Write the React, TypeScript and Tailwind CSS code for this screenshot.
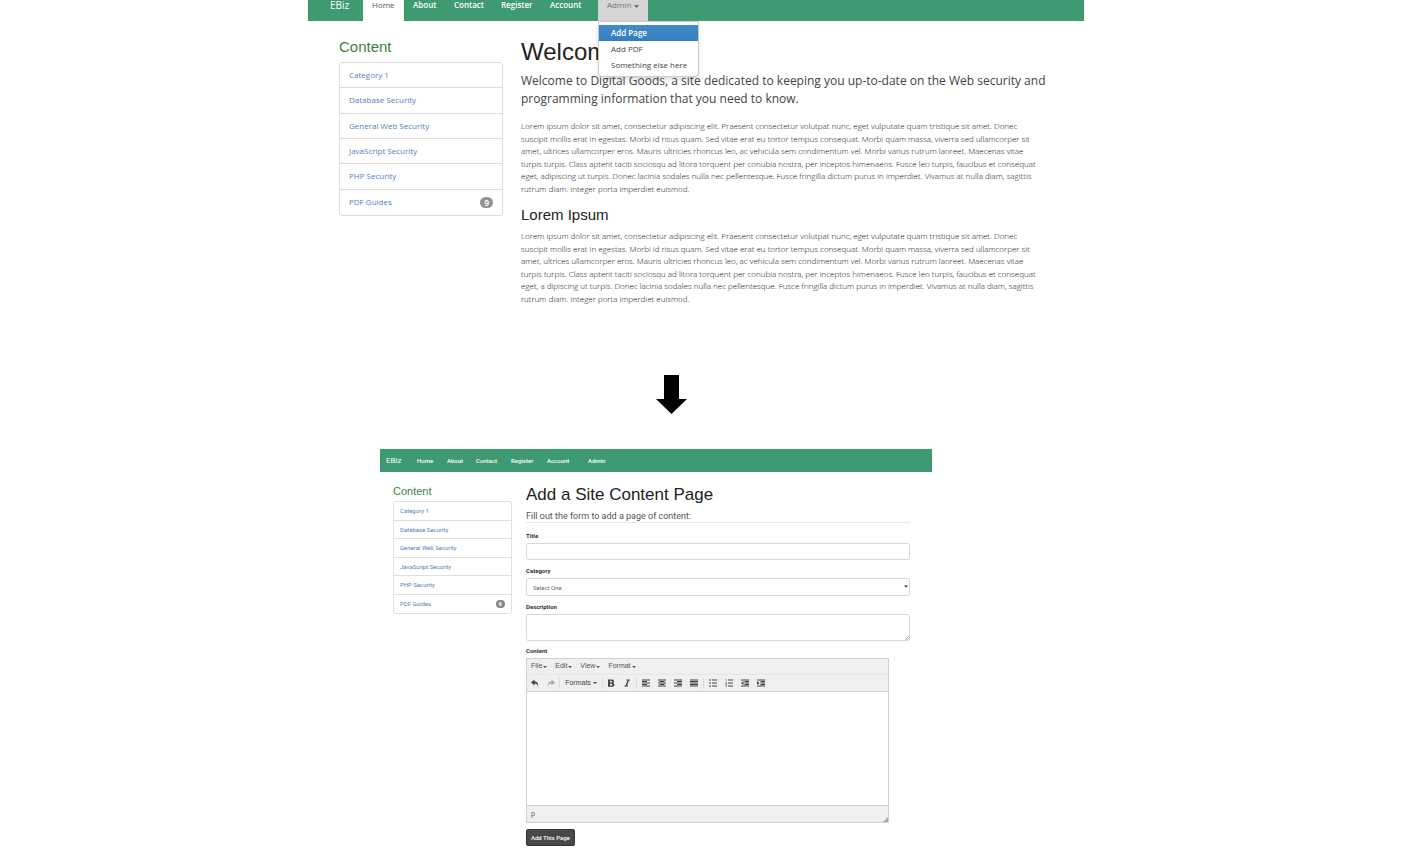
import React from "react";

const categories = [
  "Category 1",
  "Database Security",
  "General Web Security",
  "JavaScript Security",
  "PHP Security",
  "PDF Guides",
];

const introLines = [
  "Lorem ipsum dolor sit amet, consectetur adipiscing elit. Praesent consectetur volutpat nunc, eget vulputate quam tristique sit amet. Donec",
  "suscipit mollis erat in egestas. Morbi id risus quam. Sed vitae erat eu tortor tempus consequat. Morbi quam massa, viverra sed ullamcorper sit",
  "amet, ultrices ullamcorper eros. Mauris ultricies rhoncus leo, ac vehicula sem condimentum vel. Morbi varius rutrum laoreet. Maecenas vitae",
  "turpis turpis. Class aptent taciti sociosqu ad litora torquent per conubia nostra, per inceptos himenaeos. Fusce leo turpis, faucibus et consequat",
  "eget, adipiscing ut turpis. Donec lacinia sodales nulla nec pellentesque. Fusce fringilla dictum purus in imperdiet. Vivamus at nulla diam, sagittis",
  "rutrum diam. Integer porta imperdiet euismod.",
];

const secondLines = introLines.map((line) =>
  line.replace("eget, adipiscing ut", "eget, a dipiscing ut")
);

function Caret({ className }: { className: string }) {
  return (
    <svg viewBox="0 0 6 3" className={className} fill="currentColor" aria-hidden="true">
      <path d="M0 0h6L3 3z" />
    </svg>
  );
}

function Paragraph({ lines }: { lines: string[] }) {
  return (
    <p className="grid min-h-[75px] auto-rows-fr items-center whitespace-nowrap text-[8px] font-light leading-[12px] text-[#111]">
      {lines.map((line) => (
        <span key={line} className="block">
          {line}{" "}
        </span>
      ))}
    </p>
  );
}

function TopNav() {
  return (
    <nav className="flex h-[21px] items-stretch bg-[#3e9a71] text-[8px] font-semibold leading-[10px] text-white">
      <a href="#ebiz" className="w-[55px] pl-[22px] text-[10px] font-medium">
        EBiz
      </a>
      <a href="#home" className="w-[41px] bg-white pl-[9px] font-normal text-[#555]">
        Home
      </a>
      <a href="#about" className="w-[41px] pl-[9px]">
        About
      </a>
      <a href="#contact" className="w-[47px] pl-[9px]">
        Contact
      </a>
      <a href="#register" className="w-[49px] pl-[9px]">
        Register
      </a>
      <a href="#account" className="flex w-[57px] gap-[3px] pl-[9px]">
        Account
        <Caret className="mt-[5px] h-[3px] w-[5px] text-[#4f8a67]" />
      </a>
      <div className="relative w-[50px] bg-[#d5d5d5] font-normal">
        <button type="button" className="flex h-full gap-[3px] pl-[9px] text-[#777]">
          Admin
          <Caret className="mt-[5px] h-[3px] w-[5px] text-[#555]" />
        </button>
        <ul className="absolute left-0 top-full z-10 w-[101px] rounded-b-sm border border-[#ccc] bg-white py-[3px] leading-[16px] text-[#444] shadow-md">
          <li>
            <a
              href="#add-page"
              className="block bg-linear-to-b from-[#428bca] to-[#357ebd] pl-[12px] font-semibold text-white"
            >
              Add Page
            </a>
          </li>
          <li>
            <a href="#add-pdf" className="block pl-[12px]">
              Add PDF
            </a>
          </li>
          <li>
            <a href="#something" className="block whitespace-nowrap pl-[12px]">
              Something else here
            </a>
          </li>
        </ul>
      </div>
    </nav>
  );
}

function HomePage() {
  return (
    <section className="font-['Open_Sans',sans-serif]">
      <TopNav />
      <div className="flex gap-[18px] pl-[31px]">
        <aside className="w-[164px] shrink-0 pt-[17px]">
          <h3 className="font-['Liberation_Sans',sans-serif] text-[15px] leading-[18px] text-[#3f8144]">
            Content
          </h3>
          <ul className="mt-[6px] grid min-h-[154px] auto-rows-fr divide-y divide-[#ddd] rounded-[3px] border border-[#ddd] text-[8px] text-[#4f83c0]">
            {categories.map((name) => (
              <li key={name} className="flex items-center justify-between px-[9px]">
                <a href="#category">{name}</a>
                {name === "PDF Guides" && (
                  <span className="rounded-full bg-[#939393] px-[4px] text-[8px] font-bold leading-[11px] text-white">
                    9
                  </span>
                )}
              </li>
            ))}
          </ul>
        </aside>
        <main className="min-w-0 flex-1 pt-[17px]">
          <h1 className="font-['Liberation_Sans',sans-serif] text-[24px] leading-[28px] text-[#222]">
            Welcome
          </h1>
          <p className="mt-[6px] whitespace-nowrap text-[12px] leading-[18px] text-[#444]">
            Welcome to Digital Goods, a site dedicated to keeping you up-to-date on the Web security and
            <br />
            programming information that you need to know.
          </p>
          <div className="mt-[12px]">
            <Paragraph lines={introLines} />
          </div>
          <h3 className="mb-[6px] mt-[11px] font-['Liberation_Sans',sans-serif] text-[15px] leading-[18px] text-[#222]">
            Lorem Ipsum
          </h3>
          <Paragraph lines={secondLines} />
        </main>
      </div>
    </section>
  );
}

function ToolIcon({ label, children }: { label: string; children: React.ReactNode }) {
  return (
    <button type="button" aria-label={label} className="flex w-[16px] items-center justify-center">
      <svg viewBox="0 0 16 16" className="h-[8px] w-[8px]" fill="currentColor" aria-hidden="true">
        {children}
      </svg>
    </button>
  );
}

function Lines({ d }: { d: string }) {
  return <path d={d} stroke="currentColor" strokeWidth="2.4" fill="none" />;
}

function Separator({ wide = false }: { wide?: boolean }) {
  return <span className={wide ? "mx-px my-[2px] w-px bg-[#dedede]" : "my-[2px] w-px bg-[#dedede]"} />;
}

function Editor() {
  return (
    <div className="mr-[21px] border border-[#d0d0d0] bg-[#efefef] font-['Liberation_Sans',sans-serif] text-[7px] text-[#555]">
      <div className="flex h-[16px] items-center gap-[8px] border-b border-[#e6e6e6] pl-[4px]">
        {["File", "Edit", "View", "Format"].map((name) => (
          <button key={name} type="button" className="flex items-center gap-px">
            {name}
            <Caret className="h-[2px] w-[4px]" />
          </button>
        ))}
      </div>
      <div className="flex h-[17px] items-stretch border-b border-[#d0d0d0] text-[#444]">
        <ToolIcon label="Undo">
          <path d="M7 1v4c5 0 8 3 7 10-1-4-3-6-7-6v4L0 7z" />
        </ToolIcon>
        <span className="flex text-[#aaa]">
          <ToolIcon label="Redo">
            <path d="M9 1v4C4 5 1 8 2 15c1-4 3-6 7-6v4l7-6z" />
          </ToolIcon>
        </span>
        <Separator />
        <button type="button" className="flex w-[42px] items-center justify-center gap-[2px]">
          Formats
          <Caret className="h-[2px] w-[4px]" />
        </button>
        <Separator />
        <ToolIcon label="Bold">
          <path
            fillRule="evenodd"
            d="M2 1h7c3 0 5 1 5 4 0 1.500-.8 2.500-2 3 1.800.5 2.800 1.600 2.800 3.300 0 3-2.300 4.200-5.800 4.200H2zM6 3.500V7h2c3 0 3-3.500 0-3.500zm0 5.800V13h2.500c3 0 3-3.700 0-3.700z"
          />
        </ToolIcon>
        <ToolIcon label="Italic">
          <path d="M7 1h7v2h-2L8 13h2v2H3v-2h2L9 3H7z" />
        </ToolIcon>
        <Separator wide />
        <ToolIcon label="Align left">
          <Lines d="M0 2h16M0 5h10M0 8h16M0 11h10M0 14h16" />
        </ToolIcon>
        <ToolIcon label="Align center">
          <Lines d="M0 2h16M3 5h10M0 8h16M3 11h10M0 14h16" />
        </ToolIcon>
        <ToolIcon label="Align right">
          <Lines d="M0 2h16M6 5h10M0 8h16M6 11h10M0 14h16" />
        </ToolIcon>
        <ToolIcon label="Justify">
          <Lines d="M0 2h16M0 5h16M0 8h16M0 11h16M0 14h16" />
        </ToolIcon>
        <Separator wide />
        <ToolIcon label="Bullet list">
          <Lines d="M0 2h4M6 2h10M0 8h4M6 8h10M0 14h4M6 14h10" />
        </ToolIcon>
        <ToolIcon label="Numbered list">
          <Lines d="M6 2h10M6 8h10M6 14h10" />
          <path d="M1 1h1.500v4M1 7h2v2H1v1.500h2M1 12h2v3H1" stroke="currentColor" fill="none" />
        </ToolIcon>
        <ToolIcon label="Decrease indent">
          <Lines d="M0 2h16M7 5h9M7 8h9M7 11h9M0 14h16" />
          <path d="M5 4v8L0 8z" />
        </ToolIcon>
        <ToolIcon label="Increase indent">
          <Lines d="M0 2h16M7 5h9M7 8h9M7 11h9M0 14h16" />
          <path d="M0 4v8l5-4z" />
        </ToolIcon>
      </div>
      <div
        contentEditable
        suppressContentEditableWarning
        role="textbox"
        aria-labelledby="content-label"
        className="h-[113px] bg-white"
      />
      <div className="flex h-[17px] items-center justify-between border-t border-[#d0d0d0] pl-[4px]">
        <span>p</span>
        <svg viewBox="0 0 6 6" className="h-[5px] w-[5px] self-end text-[#aaa]" fill="currentColor" aria-hidden="true">
          <path d="M6 0v6H0z" />
        </svg>
      </div>
    </div>
  );
}

function FormPage() {
  const label = "block text-[6px] font-bold leading-[8px] text-[#333]";
  const field = "block w-full rounded-[2px] border border-[#d9d9d9] bg-white text-[6px] text-[#666] outline-none";
  return (
    <section className="ml-[72px] mr-[152px]">
      <nav className="flex h-[23px] items-center bg-[#3e9a71] text-[6px] font-medium leading-[8px] text-white">
        <a href="#ebiz" className="w-[30px] pl-[6px] text-[8px] font-normal">
          EBiz
        </a>
        <a href="#home" className="w-[30px] pl-[7px]">
          Home
        </a>
        <a href="#about" className="w-[29px] pl-[7px]">
          About
        </a>
        <a href="#contact" className="w-[35px] pl-[7px]">
          Contact
        </a>
        <a href="#register" className="w-[36px] pl-[7px]">
          Register
        </a>
        <a href="#account" className="flex w-[41px] items-center gap-[3px] pl-[7px]">
          Account
          <Caret className="h-[2px] w-[3px] text-[#4f8a67]" />
        </a>
        <a href="#admin" className="flex items-center gap-[3px] pl-[7px]">
          Admin
          <Caret className="h-[2px] w-[3px] text-[#4f8a67]" />
        </a>
      </nav>
      <div className="flex gap-[14px] pl-[13px] pr-[22px]">
        <aside className="w-[119px] shrink-0 pt-[12px]">
          <h3 className="font-['Liberation_Sans',sans-serif] text-[11px] leading-[14px] text-[#3f8144]">
            Content
          </h3>
          <ul className="mt-[3px] grid min-h-[113px] auto-rows-fr divide-y divide-[#e0e0e0] rounded-[2px] border border-[#e0e0e0] text-[6px] text-[#4f83c0]">
            {categories.map((name) => (
              <li key={name} className="flex items-center justify-between px-[6px]">
                <a href="#category">{name}</a>
                {name === "PDF Guides" && (
                  <span className="rounded-full bg-[#858585] px-[3px] text-[6px] font-bold leading-[8px] text-white">
                    9
                  </span>
                )}
              </li>
            ))}
          </ul>
        </aside>
        <main className="min-w-0 flex-1 pt-[12px]">
          <h1 className="font-['Liberation_Sans',sans-serif] text-[17px] leading-[22px] text-[#222]">
            Add a Site Content Page
          </h1>
          <form onSubmit={(event) => event.preventDefault()}>
            <p className="mt-[4px] border-b border-[#e8e8e8] text-[9px] leading-[12px] text-[#555]">
              Fill out the form to add a page of content:
            </p>
            <div className="mt-[9px]">
              <label htmlFor="title" className={label}>
                Title
              </label>
              <input id="title" type="text" className={`${field} mt-[3px] h-[17px] px-[6px]`} />
            </div>
            <div className="mt-[7px]">
              <label htmlFor="category" className={label}>
                Category
              </label>
              <div className="relative mt-[3px]">
                <select id="category" className={`${field} h-[18px] appearance-none px-[6px]`}>
                  <option>Select One</option>
                </select>
                <Caret className="pointer-events-none absolute right-[2px] top-[7px] h-[3px] w-[4px] text-[#222]" />
              </div>
            </div>
            <div className="mt-[7px]">
              <label htmlFor="description" className={label}>
                Description
              </label>
              <div className="relative mt-[3px]">
                <textarea id="description" className={`${field} h-[27px] resize-none p-[4px]`} />
                <svg
                  viewBox="0 0 5 5"
                  className="pointer-events-none absolute bottom-px right-px h-[4px] w-[4px] text-[#999]"
                  stroke="currentColor"
                  aria-hidden="true"
                >
                  <path d="M0 5L5 0M3 5l2-2" />
                </svg>
              </div>
            </div>
            <div className="mt-[6px]">
              <span id="content-label" className={`${label} mb-[3px]`}>
                Content
              </span>
              <Editor />
            </div>
            <button
              type="submit"
              className="mt-[6px] block h-[17px] rounded-[2px] border border-[#333] bg-[#474949] px-[4px] text-[6px] font-medium text-white"
            >
              Add This Page
            </button>
          </form>
        </main>
      </div>
    </section>
  );
}

export default function App() {
  return (
    <div className="bg-white pl-[308px] pr-[326px] font-[Roboto,'Open_Sans',sans-serif]">
      <HomePage />
      <div className="flex pb-[35px] pl-[348px] pt-[70px]">
        <svg viewBox="0 0 31 39" className="h-[39px] w-[31px]" aria-label="Leads to">
          <path d="M8 0h15v24h8L15.500 39 0 24h8z" />
        </svg>
      </div>
      <FormPage />
    </div>
  );
}
